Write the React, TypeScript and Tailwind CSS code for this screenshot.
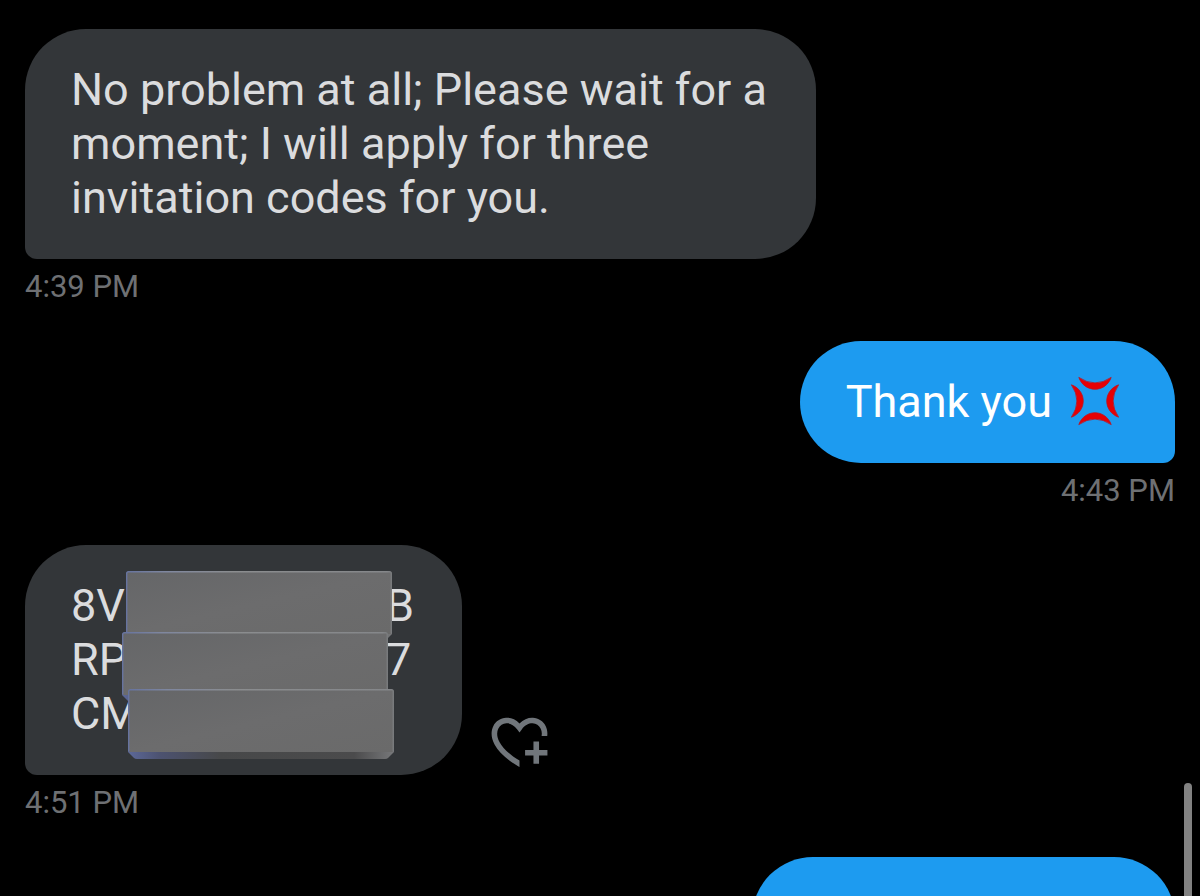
import React from 'react';

interface BubbleProps {
    side: 'in' | 'out';
    time?: string;
    action?: React.ReactNode;
    className?: string;
    children?: React.ReactNode;
}

function Bubble({ side, time, action, className = '', children }: BubbleProps) {
    const isOut = side === 'out';

    return (
        <article className={`flex flex-col ${isOut ? 'items-end' : 'items-start'}`}>
            <div className="flex items-end gap-6">
                <div className={`relative max-w-[791px] px-[46px] py-[34px] text-[45px] leading-[54px] rounded-t-[61px] ${isOut ? 'bg-[#1d9bf0] text-white rounded-bl-[61px] rounded-br-xl' : 'bg-[#333639] text-[#dbdcde] rounded-br-[61px] rounded-bl-xl'} ${className}`}>
                    {children}
                </div>
                {action}
            </div>
            {time && <time className="mt-2 text-[31px] leading-10 text-[#6e7073]">{time}</time>}
        </article>
    );
}

// 💢 emoji, one crescent turned four times
function AngerIcon() {
    const crescent = 'M-16.2 -23.6 Q0 -12.6 16.2 -23.6 C10.5 -7.8 -10.5 -7.8 -16.2 -23.6 Z';
    return (
        <svg width="59" height="54" viewBox="-25 -26 59 54" role="img" aria-label="anger" className="shrink-0">
            <g fill="#e60005" stroke="#c0101c" strokeWidth="0.8" strokeLinejoin="round">
                {[0, 90, 180, 270].map(deg => <path key={deg} d={crescent} transform={`rotate(${deg})`} />)}
            </g>
        </svg>
    );
}

function HeartPlusIcon() {
    return (
        <svg width="67" height="67" viewBox="0 0 24 24" fill="currentColor" aria-hidden="true">
            <path d="M17 12v3h-2.998v2h3v3h2v-3h3v-2h-3.001v-3H17zm-5 6.839c-3.871-2.34-6.053-4.639-7.127-6.609-1.112-2.04-1.031-3.7-.479-4.82.561-1.13 1.667-1.84 2.91-1.91 1.222-.06 2.68.51 3.892 2.16l.806 1.09.805-1.09c1.211-1.65 2.668-2.22 3.89-2.16 1.242.07 2.347.78 2.908 1.91.334.677.49 1.554.321 2.59h2.011c.153-1.283-.039-2.469-.539-3.48-.887-1.79-2.647-2.91-4.601-3.01-1.65-.09-3.367.56-4.796 2.01-1.43-1.45-3.147-2.1-4.798-2.01-1.954.1-3.714 1.22-4.601 3.01-.896 1.81-.846 4.17.514 6.67 1.353 2.48 4.003 5.12 8.382 7.67l.502.299v-2.32z" />
        </svg>
    );
}

// Solid blocks laid over the middle of the codes
function Redaction() {
    const blocks = [
        { x: 6, y: 1 },
        { x: 2, y: 62 },
        { x: 8, y: 119 },
    ];
    return (
        <svg width="276" height="190" viewBox="0 0 276 190" className="absolute left-[95px] top-[25px]" aria-hidden="true">
            <defs>
                <linearGradient id="face" x1="0" y1="0" x2="1" y2="1">
                    <stop offset="0" stopColor="#656668" />
                    <stop offset="0.5" stopColor="#6c6c6d" />
                    <stop offset="1" stopColor="#6a6a6a" />
                </linearGradient>
                <linearGradient id="bevel" x1="0" y1="0" x2="1" y2="0">
                    <stop offset="0" stopColor="#5c6898" />
                    <stop offset="0.12" stopColor="#4c5270" />
                    <stop offset="0.35" stopColor="#474849" />
                    <stop offset="0.85" stopColor="#4b4b4c" />
                    <stop offset="1" stopColor="#77787a" />
                </linearGradient>
                <linearGradient id="rim" gradientUnits="userSpaceOnUse" x1="0" y1="0" x2="266" y2="0">
                    <stop offset="0" stopColor="#66739f" />
                    <stop offset="0.15" stopColor="#7f879f" />
                    <stop offset="0.4" stopColor="#8b8d8f" />
                    <stop offset="0.98" stopColor="#85878a" />
                    <stop offset="1" stopColor="#77797b" />
                </linearGradient>
            </defs>
            {blocks.map(({ x, y }) => (
                <g key={y} transform={`translate(${x} ${y})`}>
                    <path d="M0 61 V63 L6 69 Q7 70 9 70 H257 Q259 70 260 69 L266 63 V61 Z" fill="url(#bevel)" />
                    <path d="M2 0.5 H264 Q265.5 0.5 265.5 2 V62 L264 63 H2 L0.5 62 V2 Q0.5 0.5 2 0.5 Z" fill="url(#face)" />
                    <path d="M0.7 62 V2.5 Q0.7 0.7 2.5 0.7 H263.5 Q265.3 0.7 265.3 2.5 V62" fill="none" stroke="url(#rim)" strokeWidth="1.4" />
                </g>
            ))}
        </svg>
    );
}

export default function App() {
    return (
        <main className="h-screen overflow-hidden bg-black px-[25px] pt-[29px] font-['Roboto',sans-serif]">
            <div className="flex flex-col gap-[34px]">
                <Bubble side="in" time="4:39 PM">
                    <p>No problem at all; Please wait for a moment; I will apply for three invitation codes for you.</p>
                </Bubble>

                <Bubble side="out" time="4:43 PM">
                    <p className="flex items-center gap-[18px]">
                        Thank you
                        <AngerIcon />
                    </p>
                </Bubble>

                <Bubble
                    side="in"
                    time="4:51 PM"
                    action={
                        <button type="button" aria-label="Add reaction" className="shrink-0 text-[#71767b]">
                            <HeartPlusIcon />
                        </button>
                    }
                >
                    <div className="grid grid-cols-[315px_30px]">
                        <span>8V</span>
                        <span>B</span>
                        <span>RP</span>
                        <span>7</span>
                        <span>CM</span>
                    </div>
                    <Redaction />
                </Bubble>

                <Bubble side="out" className="w-[423px] h-[122px]" />
            </div>

            {/* scroll thumb */}
            <div className="fixed right-2 bottom-0 h-[113px] w-2 rounded-t-full bg-[#828282]" />
        </main>
    );
}
